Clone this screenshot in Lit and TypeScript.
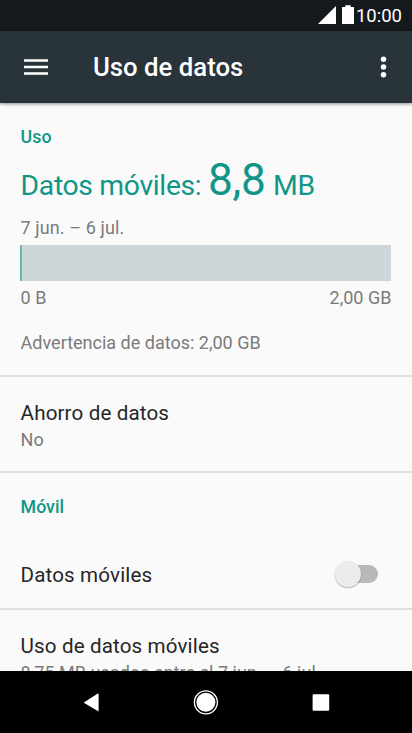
import { LitElement, html, css, svg } from "lit";
import { customElement, property } from "lit/decorators.js";

@customElement("status-bar")
class StatusBar extends LitElement {
  static styles = css`
    :host { display: flex; justify-content: flex-end; align-items: flex-start; height: 31px; background: #14191c; color: #fff; box-sizing: border-box; padding-right: 10px; flex: none; }
    .icons { flex: none; margin-right: 2px; }
    .time { font-size: 18.5px; line-height: 32px; }
  `;
  render() {
    return html`
      <svg class="icons" width="36" height="31" viewBox="0 0 36 31" fill="#fff">
        <path d="M0 24 L18 6 V24 Z" />
        <path d="M24 7 H27.3 V5.3 H32.7 V7 H36 V24 H24 Z" />
      </svg>
      <span class="time">10:00</span>
    `;
  }
}

@customElement("app-bar")
class AppBar extends LitElement {
  @property() heading = "";
  static styles = css`
    :host { display: flex; align-items: center; height: 72px; padding: 0 24px; box-sizing: border-box; background: #28333a; color: #fff; box-shadow: 0 1px 3px rgba(0, 0, 0, 0.45); z-index: 1; flex: none; }
    .heading { flex: 1; margin: 0 0 0 45px; font-size: 25.75px; font-weight: 500; line-height: 32px; padding-bottom: 1px; }
    svg { flex: none; }
  `;
  render() {
    return html`
      <svg width="24" height="18" viewBox="0 0 24 18" fill="#fff">
        <path d="M0 1.2h24v2.6H0zM0 7.7h24v2.6H0zM0 14.2h24v2.6H0z" />
      </svg>
      <h1 class="heading">${this.heading}</h1>
      <svg width="10" height="24" viewBox="0 0 10 24" fill="#fff">
        <circle cx="5.5" cy="4.3" r="2.75" /><circle cx="5.5" cy="12" r="2.75" /><circle cx="5.5" cy="19.7" r="2.75" />
      </svg>
    `;
  }
}

@customElement("nav-bar")
class NavBar extends LitElement {
  static styles = css`
    :host { display: flex; align-items: center; justify-content: center; gap: 86px; height: 62px; background: #000; flex: none; }
  `;
  render() {
    const icons = [
      svg`<path d="M7.2 14.3 L20.8 5.5 Q21.6 5.1 21.6 6.1 V22.5 Q21.6 23.5 20.8 23.1 L7.2 15 Q6.6 14.6 7.2 14.3Z" />`,
      svg`<circle cx="13.9" cy="14.3" r="11.5" fill="none" stroke="#fff" stroke-width="1.3" /><circle cx="13.9" cy="14.3" r="9.5" />`,
      svg`<rect x="5.6" y="6.2" width="16.6" height="16.6" rx="1.2" />`,
    ];
    return icons.map((icon) => html`<svg width="29" height="28" viewBox="0 0 29 28" fill="#fff">${icon}</svg>`);
  }
}

@customElement("app-root")
class AppRoot extends LitElement {
  static styles = css`
    :host { display: flex; flex-direction: column; height: 733px; width: 412px; overflow: hidden; background: #fafafa; font-family: Roboto, "Liberation Sans", sans-serif; color: #262626; }
    .content { flex: 1; min-height: 0; overflow: hidden; display: flex; flex-direction: column; }
    section { flex: none; box-sizing: border-box; padding: 0 20.6px; border-bottom: 2px solid #e0e0e0; }
    .usage { height: 274px; padding-top: 22px; }
    .saver { height: 96px; padding-top: 22px; }
    .mobile { height: 137px; padding-top: 22px; }
    .details { padding-top: 22px; border: 0; }
    .category { color: #109688; font-size: 17.8px; font-weight: 500; line-height: 24px; }
    .total { display: flex; align-items: baseline; height: 56px; line-height: 56px; margin-top: 3px; color: #109688; font-size: 28.3px; letter-spacing: -0.33px; white-space: pre; }
    .amount { font-size: 44.2px; margin-right: 1px; }
    .secondary { color: #7b7b7b; font-size: 18px; line-height: 24px; white-space: nowrap; }
    .period { margin-top: 8px; letter-spacing: 0.1px; }
    .bar { height: 36px; margin: 5px 0 0 -0.6px; background: #cdd7d9; }
    .used { height: 100%; min-width: 1px; background: #63b9b0; }
    .range { display: flex; justify-content: space-between; margin-top: 5px; }
    .warning { margin-top: 21px; }
    .primary { font-size: 20.6px; line-height: 28px; letter-spacing: 0.13px; white-space: nowrap; }
    .saver .secondary, .details .secondary { padding-top: 1px; }
    .details .secondary { letter-spacing: 0.03px; }
    .row { display: flex; align-items: center; justify-content: space-between; margin-top: 42px; }
    .switch { display: flex; align-items: center; width: 36px; height: 18px; margin: 0 13.4px 2px 0; border-radius: 9px; background: #b9b9b9; }
    .thumb { flex: none; width: 26px; height: 26px; margin-left: -7.5px; border-radius: 50%; background: #ececec; box-shadow: 0 1px 1.5px rgba(0, 0, 0, 0.3); }
  `;
  usedRatio = 0.0043;
  render() {
    return html`
      <status-bar></status-bar>
      <app-bar heading="Uso de datos"></app-bar>
      <main class="content">
        <section class="usage">
          <div class="category">Uso</div>
          <div class="total"><span>Datos móviles: </span><span class="amount">8,8</span><span> MB</span></div>
          <div class="secondary period">7 jun. – 6 jul.</div>
          <div class="bar"><div class="used" style="width: ${this.usedRatio * 100}%"></div></div>
          <div class="secondary range"><span>0 B</span><span>2,00 GB</span></div>
          <div class="secondary warning">Advertencia de datos: 2,00 GB</div>
        </section>
        <section class="saver">
          <div class="primary">Ahorro de datos</div>
          <div class="secondary">No</div>
        </section>
        <section class="mobile">
          <div class="category">Móvil</div>
          <div class="row">
            <span class="primary">Datos móviles</span>
            <div class="switch" role="switch" aria-checked="false"><div class="thumb"></div></div>
          </div>
        </section>
        <section class="details">
          <div class="primary">Uso de datos móviles</div>
          <div class="secondary">8,75 MB usados entre el 7 jun. – 6 jul.</div>
        </section>
      </main>
      <nav-bar></nav-bar>
    `;
  }
}
